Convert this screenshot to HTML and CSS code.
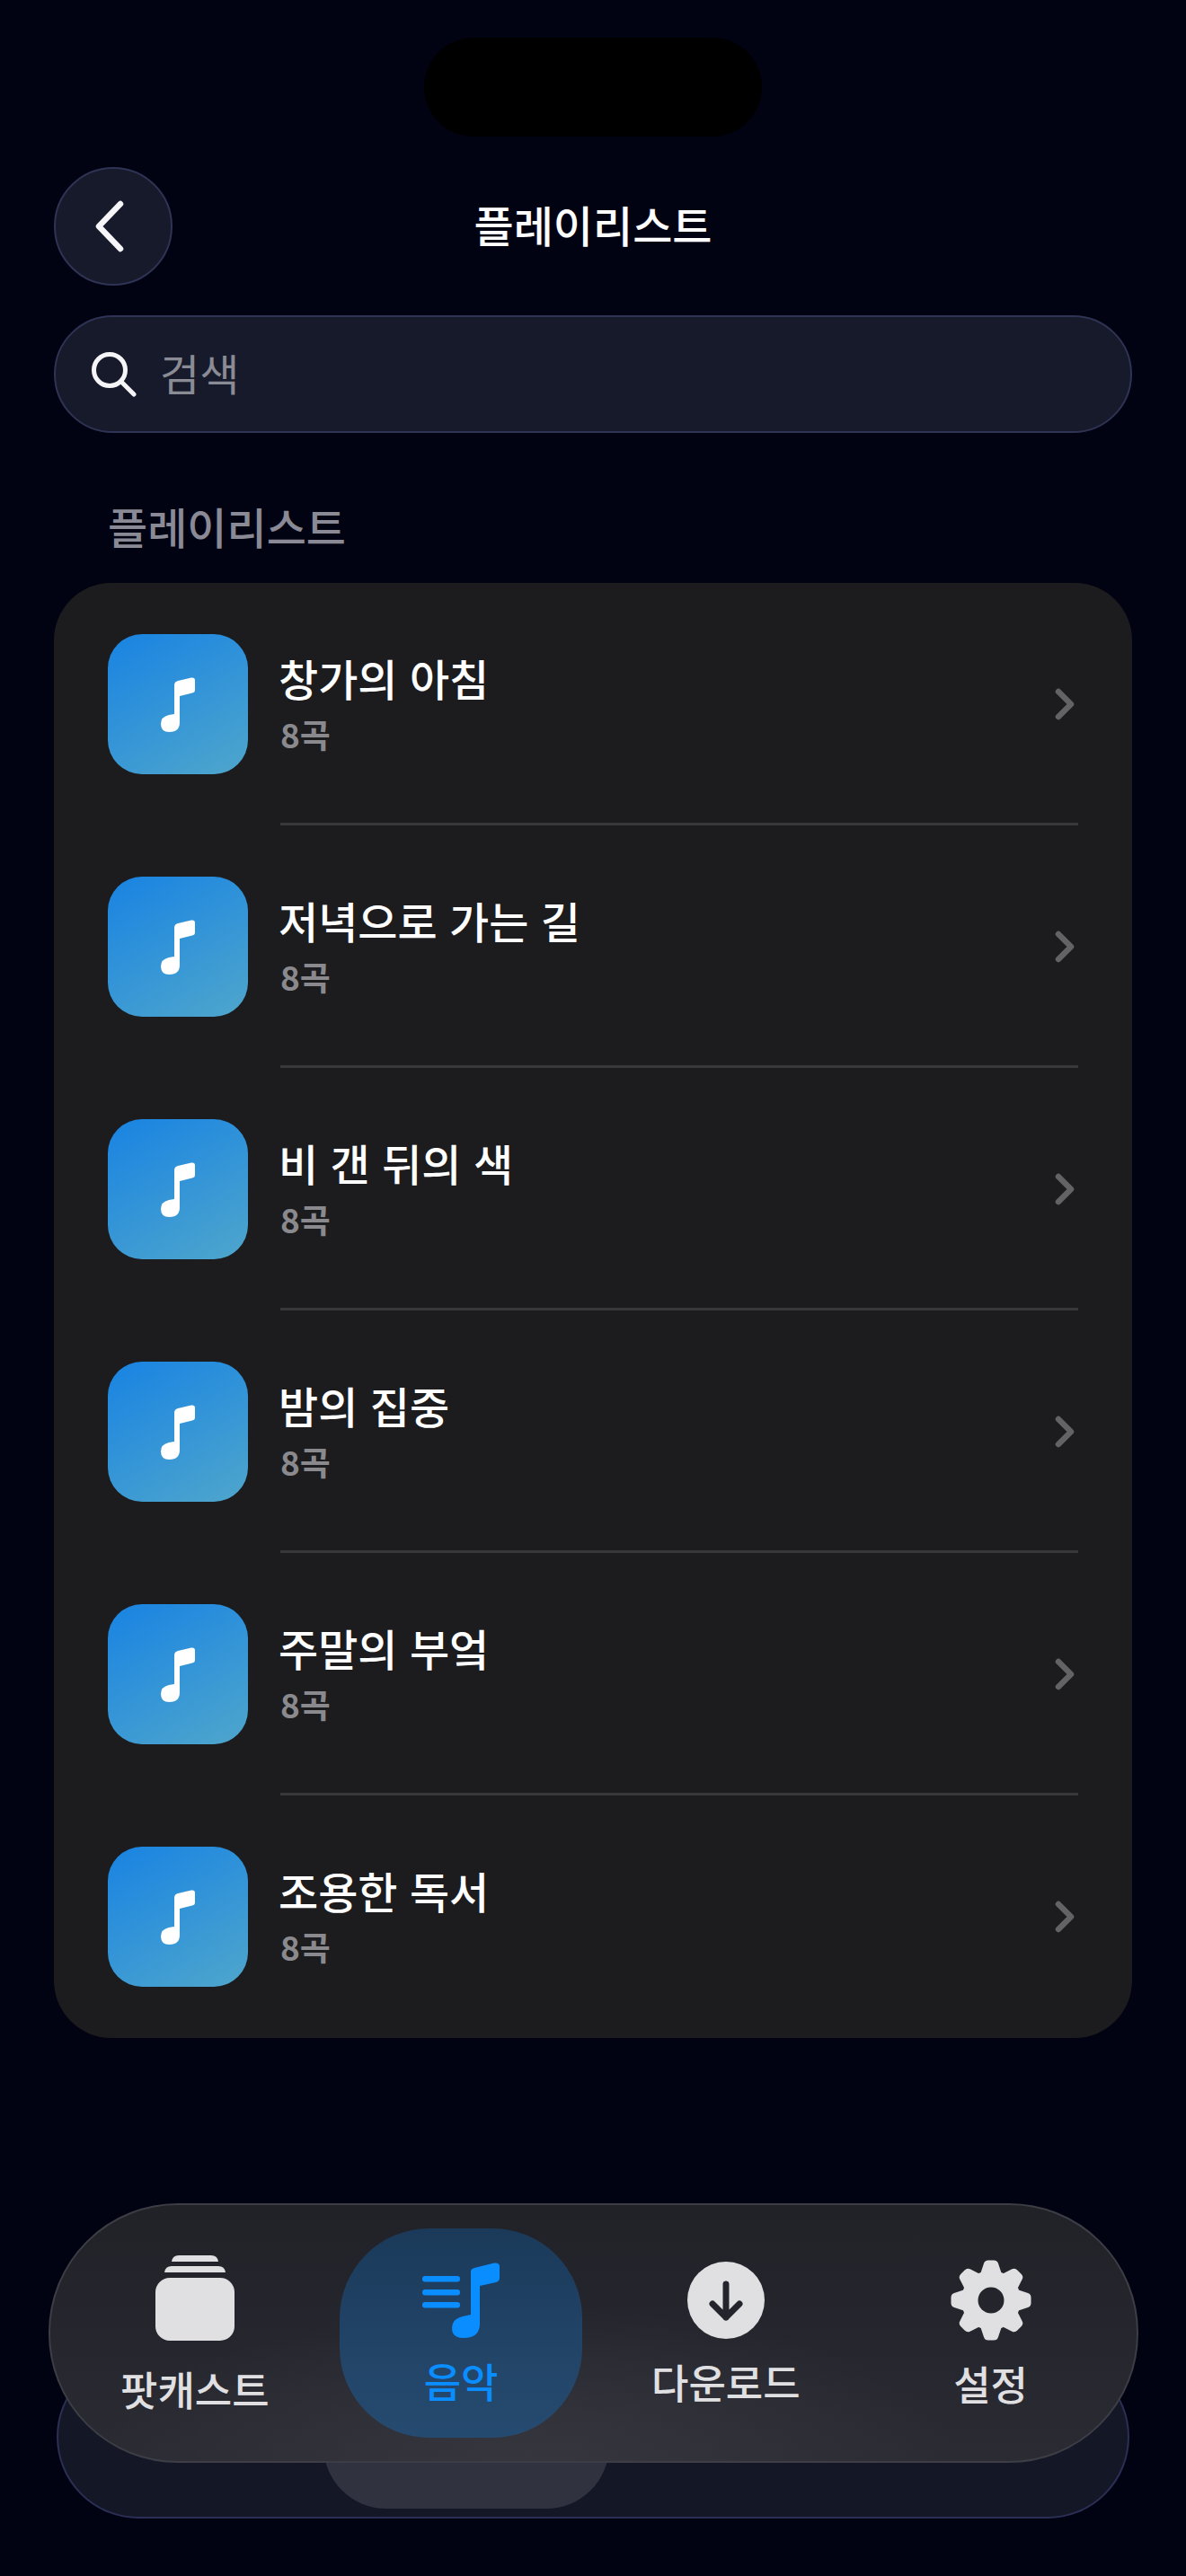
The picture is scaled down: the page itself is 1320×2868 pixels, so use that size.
FILE: index.html
```html
<!DOCTYPE html>
<html lang="ko">
<head>
    <meta charset="utf-8">
    <title>플레이리스트</title>
    <link rel="stylesheet" href="styles.css">
</head>
<body>
    <svg class="defs" width="0" height="0">
        <symbol id="note" viewBox="0 0 38 61">
            <path d="M15 9Q15 5 19 4L34 .5Q38 0 38 3.5V14Q38 17 35 17.5L21 21V50Q21 61 9.5 61Q0 61 0 52Q0 44 9 42L15 41Z"/>
        </symbol>
        <symbol id="chevron" viewBox="0 0 24 36">
            <path d="M4 4L18 18L4 32" fill="none" stroke="currentColor" stroke-width="6.5" stroke-linecap="round" stroke-linejoin="round"/>
        </symbol>
    </svg>

    <div class="island"></div>

    <header class="topbar">
        <button class="back_button">
            <svg width="40" height="60" viewBox="0 0 40 60"><path d="M31 5L7 30L31 55" fill="none" stroke="#f5f5f7" stroke-width="6.5" stroke-linecap="round" stroke-linejoin="round"/></svg>
        </button>
        <h1>플레이리스트</h1>
    </header>

    <div class="search_box">
        <svg width="50" height="50" viewBox="0 0 50 50"><circle cx="20" cy="20" r="17.5" fill="none" stroke="#f5f5f7" stroke-width="5"/><path d="M33 33L47 47" stroke="#f5f5f7" stroke-width="5" stroke-linecap="round"/></svg>
        <span>검색</span>
    </div>

    <h2 class="section_title">플레이리스트</h2>

    <section class="card">
        <div class="row">
            <div class="tile"><svg class="tile_note"><use href="#note"/></svg></div>
            <div class="row_text"><div class="row_title">창가의 아침</div><div class="row_sub">8곡</div></div>
            <svg class="row_chevron"><use href="#chevron"/></svg>
        </div>
        <div class="row">
            <div class="tile"><svg class="tile_note"><use href="#note"/></svg></div>
            <div class="row_text"><div class="row_title">저녁으로 가는 길</div><div class="row_sub">8곡</div></div>
            <svg class="row_chevron"><use href="#chevron"/></svg>
        </div>
        <div class="row">
            <div class="tile"><svg class="tile_note"><use href="#note"/></svg></div>
            <div class="row_text"><div class="row_title">비 갠 뒤의 색</div><div class="row_sub">8곡</div></div>
            <svg class="row_chevron"><use href="#chevron"/></svg>
        </div>
        <div class="row">
            <div class="tile"><svg class="tile_note"><use href="#note"/></svg></div>
            <div class="row_text"><div class="row_title">밤의 집중</div><div class="row_sub">8곡</div></div>
            <svg class="row_chevron"><use href="#chevron"/></svg>
        </div>
        <div class="row">
            <div class="tile"><svg class="tile_note"><use href="#note"/></svg></div>
            <div class="row_text"><div class="row_title">주말의 부엌</div><div class="row_sub">8곡</div></div>
            <svg class="row_chevron"><use href="#chevron"/></svg>
        </div>
        <div class="row">
            <div class="tile"><svg class="tile_note"><use href="#note"/></svg></div>
            <div class="row_text"><div class="row_title">조용한 독서</div><div class="row_sub">8곡</div></div>
            <svg class="row_chevron"><use href="#chevron"/></svg>
        </div>
    </section>

    <div class="under_bar"><div class="under_lens"></div></div>

    <nav class="tabbar">
        <div class="tab tab_podcast">
            <svg width="88" height="96" viewBox="0 0 88 96" fill="#e0e0e2">
                <path d="M18 8Q19 1 26 1H62Q69 1 70 8Z"/>
                <path d="M10 20Q11 13 18 13H70Q77 13 78 20Z"/>
                <rect y="26" width="88" height="70" rx="16"/>
            </svg>
            <span>팟캐스트</span>
        </div>
        <div class="tab tab_active">
            <svg width="86" height="84" viewBox="0 0 86 84" fill="#0a8dff">
                <rect y="15" width="42" height="6.5" rx="3.2"/>
                <rect y="30" width="42" height="6.5" rx="3.2"/>
                <rect y="44" width="42" height="6.5" rx="3.2"/>
                <path d="M54 10Q54 7 58 6L80 .5Q86 0 86 4V17Q86 21 82 22L64 26V68Q64 84 46 84Q33 84 33 73Q33 63 45 60L54 58Z"/>
            </svg>
            <span>음악</span>
        </div>
        <div class="tab">
            <svg width="86" height="86" viewBox="0 0 86 86">
                <circle cx="43" cy="43" r="43" fill="#e0e0e2"/>
                <path d="M43 25V62M28 47L43 62L58 47" fill="none" stroke="#24252c" stroke-width="7" stroke-linecap="round" stroke-linejoin="round"/>
            </svg>
            <span>다운로드</span>
        </div>
        <div class="tab">
            <svg width="90" height="90" viewBox="-45 -45 90 90">
                <mask id="gear_hole"><rect x="-45" y="-45" width="90" height="90" fill="#fff"/><circle r="14.5" fill="#000"/></mask>
                <g fill="#e0e0e2" mask="url(#gear_hole)">
                    <circle r="33"/>
                    <path id="gear_tooth" d="M-12-29L-8-41Q-7-44.5-3-44.5H3Q7-44.5 8-41L12-29Z"/>
                    <use href="#gear_tooth" transform="rotate(45)"/>
                    <use href="#gear_tooth" transform="rotate(90)"/>
                    <use href="#gear_tooth" transform="rotate(135)"/>
                    <use href="#gear_tooth" transform="rotate(180)"/>
                    <use href="#gear_tooth" transform="rotate(225)"/>
                    <use href="#gear_tooth" transform="rotate(270)"/>
                    <use href="#gear_tooth" transform="rotate(315)"/>
                </g>
            </svg>
            <span>설정</span>
        </div>
    </nav>
</body>
</html>
```

FILE: styles.css
```css
* {
    box-sizing: border-box;
}
html, body {
    margin: 0;
    height: 2868px;
}
body {
    background-color: #020312;
    color: #ffffff;
    font-family: "Noto Sans CJK KR", "Noto Sans", sans-serif;
    padding: 42px 60px 0;
    position: relative;
    overflow: hidden;
}
.defs {
    position: absolute;
}
.island {
    width: 376px;
    height: 110px;
    margin: 0 auto;
    border-radius: 55px;
    background-color: #000000;
}
.topbar {
    display: grid;
    grid-template-columns: 132px 1fr 132px;
    align-items: center;
    margin-top: 34px;
}
.back_button {
    width: 132px;
    height: 132px;
    padding: 0 6px 0 0;
    border: 2px solid #2f3354;
    border-radius: 50%;
    background-color: #161a2b;
    display: flex;
    align-items: center;
    justify-content: center;
}
.topbar h1 {
    margin: 0;
    padding-bottom: 7px;
    font-size: 48px;
    font-weight: 500;
    line-height: 60px;
    text-align: center;
}
.search_box {
    height: 131px;
    margin-top: 33px;
    padding: 0 40px;
    display: flex;
    align-items: center;
    gap: 26px;
    border: 2px solid #2f3354;
    border-radius: 66px;
    background-color: #161a2b;
    color: #8a8b94;
    font-size: 48px;
    line-height: 60px;
}
.search_box span {
    padding-bottom: 6px;
}
.section_title {
    margin: 73px 0 34px 60px;
    font-size: 48px;
    font-weight: 500;
    line-height: 60px;
    color: #8a8a96;
}
.card {
    padding: 0 60px;
    border-radius: 64px;
    background-color: #1c1c1e;
}
.row {
    height: 270px;
    display: flex;
    align-items: center;
    gap: 36px;
    position: relative;
}
.row:not(:last-child)::after {
    content: "";
    position: absolute;
    left: 192px;
    right: 0;
    bottom: 0;
    height: 3px;
    background-color: #38383a;
}
.tile {
    width: 156px;
    height: 156px;
    border-radius: 38px;
    background: linear-gradient(150deg, #1883e2, #4fa6cc);
    display: flex;
    align-items: center;
    justify-content: center;
    flex-shrink: 0;
}
.tile_note {
    width: 38px;
    height: 61px;
    fill: #ffffff;
}
.row_text {
    flex: 1;
    padding-bottom: 5px;
}
.row_title {
    margin-left: -2px;
    font-size: 48px;
    font-weight: 500;
    line-height: 60px;
}
.row_sub {
    margin-top: 11px;
    font-size: 37px;
    font-weight: 600;
    line-height: 44px;
    color: #8a8a8e;
}
.row_chevron {
    width: 24px;
    height: 36px;
    color: #636366;
    margin-right: 2px;
}

/* the bar floats over the page, the lower one pokes out from under it */
.under_bar {
    position: absolute;
    left: 63px;
    top: 2622px;
    width: 1194px;
    height: 182px;
    border: 2px solid #2b2f55;
    border-radius: 91px;
    background-color: #141725;
}
.under_lens {
    position: absolute;
    left: 295px;
    top: -2px;
    width: 318px;
    height: 171px;
    border-radius: 70px;
    background-color: #31323f;
}
.tabbar {
    position: absolute;
    left: 54px;
    top: 2453px;
    width: 1213px;
    height: 289px;
    padding: 0 15px;
    display: grid;
    grid-template-columns: repeat(4, 1fr);
    align-items: center;
    border: 2px solid #3c3d45;
    border-radius: 144px;
    background: radial-gradient(ellipse 40% 60% at 44% 100%, #36363e, rgba(55, 55, 63, 0)), linear-gradient(#212228, #2a2b33);
}
.tab {
    display: flex;
    flex-direction: column;
    align-items: center;
    justify-content: center;
    height: 233px;
    color: #e0e0e2;
    font-size: 45px;
    font-weight: 500;
    line-height: 56px;
}
.tab svg {
    margin-top: 2px;
    margin-bottom: 20px;
}
.tab_podcast svg {
    margin-bottom: 26px;
    margin-left: -3px;
    margin-top: -6px;
}
.tab_podcast span {
    margin-bottom: -8px;
    margin-left: -3px;
}
.tab_active {
    width: 270px;
    justify-self: center;
    border-radius: 100px;
    background: linear-gradient(#1b3a5a, #264b70);
    color: #0a8dff;
}
```
